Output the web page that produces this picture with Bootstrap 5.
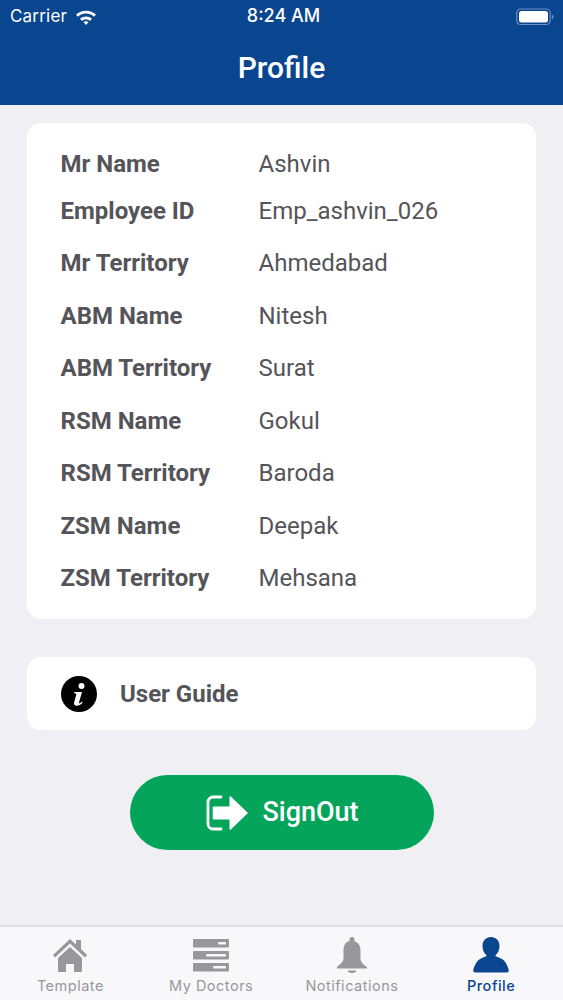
<!DOCTYPE html>
<html lang="en">
<head>
<meta charset="utf-8">
<title>Profile</title>
<link href="https://cdn.jsdelivr.net/npm/bootstrap@5.3.0/dist/css/bootstrap.min.css" rel="stylesheet">
<style>
html,body{height:1000px;overflow:hidden}
body{width:563px;background:#efeff4;font-family:Roboto,"Liberation Sans",sans-serif;color:#555459}
.app-top{background:#0a458f;height:105px;color:#fff}
.status-row{height:32px;padding:2px 9px 0 10px;font-family:Inter,"Liberation Sans",sans-serif;font-size:17px;position:relative}
.status-time{font-weight:500;position:absolute;left:0;right:0;text-align:center;font-size:18px;top:4px;line-height:24px;padding-left:4px}
.carrier{font-weight:400;letter-spacing:.2px}
.page-title{font-size:30px;font-weight:500;line-height:36px;text-align:center;margin-top:18px}
.main-area{padding:18px 27px 0}
.info-panel{background:#fff;border-radius:14px;padding:19.5px 0 14px 33.5px;height:496px}
.info-line{height:52.5px;font-size:24px;line-height:52.5px;margin:0}
.info-line.first-line{height:42px;line-height:42px}
.info-key{width:198px;font-weight:700;flex:none;color:#555459}
.info-val{font-weight:400;color:#555459}
.guide-panel{background:#fff;border-radius:14px;height:73px;margin-top:38px;padding-left:34px;gap:23px;font-size:24px;font-weight:700}
.signout-btn{width:304px;height:75px;border-radius:38px;background:#04a45a;color:#fff;border:0;margin:45px auto 0 103px;font-size:27px;font-weight:500;gap:13px;padding:0 0 0 1px}
.tab-strip{position:absolute;left:0;right:0;top:925px;height:75px;background:#f8f8fa;border-top:2px solid #dfdee3}
.tab-item{width:140.75px;color:#98979c;font-family:Inter,"Liberation Sans",sans-serif;font-size:14.5px;font-weight:400;letter-spacing:.5px}
.tab-icon{height:44px;margin-top:6px}
.tab-label{line-height:18px;margin-top:0}
.tab-on{color:#0a458f;font-weight:500;padding-right:3px}
</style>
</head>
<body>
<header class="app-top">
  <div class="status-row d-flex align-items-center justify-content-between">
    <div class="d-flex align-items-center gap-2">
      <span class="carrier">Carrier</span>
      <svg width="22" height="17" viewBox="0 0 22 17" aria-hidden="true"><path d="M1 5.5C6.5 .4 15.5 .4 21 5.5l-2 2.2C14.500 3.500 7.500 3.500 3 7.700z M5 9.700c3.500-3.100 8.500-3.100 12 0l-2.100 2.200c-2.300-1.900-5.500-1.900-7.800 0z M8.500 13.100c1.500-1.100 3.500-1.100 5 0L11 16z" fill="#fff"/></svg>
    </div>
    <div class="status-time">8:24 AM</div>
    <svg width="38" height="18" viewBox="0 0 38 18" aria-hidden="true"><rect x=".7" y="1" width="33.500" height="15.500" rx="4" fill="none" stroke="#6d8fc4" stroke-width="1.200"/><rect x="3" y="3" width="29" height="11.500" rx="2.500" fill="#fff"/><path d="M35.800 6.500c1.200.4 1.800 1.300 1.800 2.300s-.6 1.900-1.800 2.300z" fill="#6d8fc4"/></svg>
  </div>
  <div class="page-title">Profile</div>
</header>
<main class="main-area">
  <section class="info-panel">
    <div class="info-line first-line d-flex"><div class="info-key">Mr Name</div><div class="info-val">Ashvin</div></div>
    <div class="info-line d-flex"><div class="info-key">Employee ID</div><div class="info-val">Emp_ashvin_026</div></div>
    <div class="info-line d-flex"><div class="info-key">Mr Territory</div><div class="info-val">Ahmedabad</div></div>
    <div class="info-line d-flex"><div class="info-key">ABM Name</div><div class="info-val">Nitesh</div></div>
    <div class="info-line d-flex"><div class="info-key">ABM Territory</div><div class="info-val">Surat</div></div>
    <div class="info-line d-flex"><div class="info-key">RSM Name</div><div class="info-val">Gokul</div></div>
    <div class="info-line d-flex"><div class="info-key">RSM Territory</div><div class="info-val">Baroda</div></div>
    <div class="info-line d-flex"><div class="info-key">ZSM Name</div><div class="info-val">Deepak</div></div>
    <div class="info-line d-flex"><div class="info-key">ZSM Territory</div><div class="info-val">Mehsana</div></div>
  </section>
  <section class="guide-panel d-flex align-items-center">
    <svg width="36" height="36" viewBox="0 0 36 36" aria-hidden="true"><circle cx="18" cy="18" r="18" fill="#000"/><circle cx="20.500" cy="10" r="3" fill="#fff"/><path d="M13.500 16h7.500l-3 10.500c-.2.800.5 1 1.200.5l1.800-1.300.6 1c-1.800 2-3.800 3-5.800 3-2.300 0-3.200-1.300-2.700-3.200l2.200-7.800c.2-.8-.2-1.100-1.100-1.200l-1.200-.2z" fill="#fff"/></svg>
    <span>User Guide</span>
  </section>
  <button type="button" class="btn signout-btn d-flex align-items-center justify-content-center">
    <svg width="43" height="36" viewBox="0 0 43 36" aria-hidden="true"><path d="M15 2H7a5 5 0 0 0-5 5v22a5 5 0 0 0 5 5h8" fill="none" stroke="#fff" stroke-width="2.800" stroke-linecap="round"/><path d="M8 11.500h15.500V2c0-.8.8-1 1.300-.6L42 18 24.800 34.600c-.5.400-1.300.2-1.300-.6v-9.500H8c-.8 0-1.300-.5-1.300-1.300V12.800c0-.8.500-1.300 1.300-1.300z" fill="#fff"/></svg>
    <span>SignOut</span>
  </button>
</main>
<nav class="tab-strip d-flex">
  <div class="tab-item d-flex flex-column align-items-center">
    <svg class="tab-icon" width="36" height="44" viewBox="0 0 36 44" aria-hidden="true"><path d="M1 22 18 6l6 5.500V7h5v9l6 6-2 2.500L18 10.500 3 24.500z" fill="#98979c"/><path d="M6 25 18 14l12 11v12.500c0 1-.8 1.500-1.500 1.500H22v-8h-8v8H7.500C6.800 39 6 38.500 6 37.500z" fill="#98979c"/></svg>
    <div class="tab-label">Template</div>
  </div>
  <div class="tab-item d-flex flex-column align-items-center">
    <svg class="tab-icon" width="36" height="44" viewBox="0 0 36 44" aria-hidden="true"><g fill="#98979c"><rect x="0" y="6" width="36" height="8.500" rx="1"/><rect x="0" y="18" width="36" height="8.500" rx="1"/><rect x="0" y="30" width="36" height="8.500" rx="1"/></g><g fill="#f8f8fa"><rect x="25" y="9" width="8" height="2.500" rx="1"/><rect x="13" y="21" width="20" height="2.500" rx="1"/><rect x="20" y="33" width="13" height="2.500" rx="1"/></g></svg>
    <div class="tab-label">My Doctors</div>
  </div>
  <div class="tab-item d-flex flex-column align-items-center">
    <svg class="tab-icon" width="32" height="44" viewBox="0 0 32 44" aria-hidden="true"><path d="M13.500 6.500a2.500 2.500 0 0 1 5 0v1.700c4.500 1.500 6 5 6 10v7c0 4 3 6.500 6.500 8.800v1.500H1V33.500c3.500-2.300 6.500-4.800 6.500-8.800v-7c0-5 1.500-8.500 6-10z" fill="#98979c"/><path d="M11.500 37.500h9c-.8 1.800-2.500 2.500-4.500 2.500s-3.700-.7-4.500-2.500z" fill="#98979c"/></svg>
    <div class="tab-label">Notifications</div>
  </div>
  <div class="tab-item tab-on d-flex flex-column align-items-center">
    <svg class="tab-icon" width="40" height="44" viewBox="0 0 40 44" aria-hidden="true"><path d="M20 4c5 0 8.500 3.500 8.500 9 0 4.500-1.800 7.500-4.200 9.500 .6 1.200 2.200 1.500 4.700 2.500 4 1.500 6.500 5 8.500 11 .6 2 .2 3.500-2 3.500H4.500c-2.200 0-2.600-1.500-2-3.500 2-6 4.500-9.500 8.500-11 2.500-1 4.100-1.300 4.700-2.500-2.400-2-4.200-5-4.200-9.500C11.500 7.500 15 4 20 4z" fill="#0a458f"/></svg>
    <div class="tab-label">Profile</div>
  </div>
</nav>
<script src="https://cdn.jsdelivr.net/npm/bootstrap@5.3.0/dist/js/bootstrap.bundle.min.js"></script>
</body>
</html>
